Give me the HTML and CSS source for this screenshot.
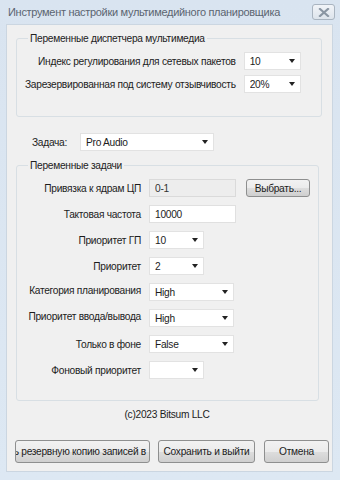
FILE: index.html
```html
<!DOCTYPE html>
<html lang="ru">
<head>
    <meta charset="UTF-8">
    <meta name="viewport" content="width=device-width, initial-scale=1.0">
    <title>Инструмент настройки мультимедийного планировщика</title>
    <link rel="stylesheet" href="styles.css">
</head>
<body>
    <div class="window">
        <div class="titlebar">
            <span class="title">Инструмент настройки мультимедийного планировщика</span>
            <button class="close" title="Закрыть">
                <svg width="12" height="9" viewBox="0 0 12 9">
                    <path d="M2 1 L10 8 M10 1 L2 8" stroke="#8a96a3" stroke-width="2.2" stroke-linecap="square"/>
                </svg>
            </button>
        </div>

        <div class="client">
            <fieldset class="group group-media">
                <legend>Переменные диспетчера мультимедиа</legend>
                <label class="field-label">Индекс регулирования для сетевых пакетов</label>
                <div class="combo combo-small"><select><option>10</option></select></div>
                <label class="field-label">Зарезервированная под систему отзывчивость</label>
                <div class="combo combo-small"><select><option>20%</option></select></div>
            </fieldset>

            <div class="task-row">
                <label class="task-label">Задача:</label>
                <div class="combo combo-task"><select><option>Pro Audio</option></select></div>
            </div>

            <fieldset class="group group-task">
                <legend>Переменные задачи</legend>

                <label class="field-label">Привязка к ядрам ЦП</label>
                <div class="affinity">
                    <input class="textbox" type="text" value="0-1" disabled>
                    <button class="btn btn-pick">Выбрать...</button>
                </div>

                <label class="field-label">Тактовая частота</label>
                <input class="textbox" type="text" value="10000">

                <label class="field-label">Приоритет ГП</label>
                <div class="combo combo-small"><select><option>10</option></select></div>

                <label class="field-label">Приоритет</label>
                <div class="combo combo-small"><select><option>2</option></select></div>

                <label class="field-label lift">Категория планирования</label>
                <div class="combo combo-wide"><select><option>High</option></select></div>

                <label class="field-label lift">Приоритет ввода/вывода</label>
                <div class="combo combo-wide"><select><option>High</option></select></div>

                <label class="field-label">Только в фоне</label>
                <div class="combo combo-wide"><select><option>False</option></select></div>

                <label class="field-label">Фоновый приоритет</label>
                <div class="combo combo-small"><select><option></option></select></div>
            </fieldset>

            <p class="copyright">(c)2023 Bitsum LLC</p>

            <div class="actions">
                <button class="btn btn-backup"><span>Создать резервную копию записей в</span></button>
                <button class="btn btn-save">Сохранить и выйти</button>
                <button class="btn btn-cancel">Отмена</button>
            </div>
        </div>
    </div>
</body>
</html>
```

FILE: styles.css
```css
body {
    margin: 0;
    font-family: "Liberation Sans", Arial, sans-serif;
    font-size: 10.2px;
    letter-spacing: -0.28px;
    color: #1c1c1c;
}
.window {
    width: 340px;
    height: 480px;
    box-sizing: border-box;
    padding: 0 7px 8px 6px;
    background: linear-gradient(#d9e4f0, #dde8f3);
    display: flex;
    flex-direction: column;
    overflow: hidden;
}
.titlebar {
    height: 24px;
    display: flex;
    align-items: center;
    justify-content: space-between;
}
.title {
    font-size: 11px;
    letter-spacing: -0.3px;
    color: #5b6470;
    padding-left: 2px;
    white-space: nowrap;
}
.close {
    width: 23px;
    height: 16px;
    margin-right: -2px;
    padding: 0;
    border: 1px solid #a9b4c0;
    border-radius: 3px;
    background: linear-gradient(#f1f4f8, #dde4ec);
    display: flex;
    align-items: center;
    justify-content: center;
}
.client {
    flex: 1;
    background: #f0f0f0;
    border: 1px solid #cbd6e1;
    padding: 0 14px 0 9px;
    display: flex;
    flex-direction: column;
}
.group {
    margin: 0;
    border: 1px solid #d8dfe4;
    border-radius: 3px;
    display: grid;
    align-items: center;
}
.group legend {
    padding: 0 2px;
    margin-left: 3px;
    color: #222;
}
.group-media {
    margin-top: 8px;
    grid-template-columns: 1fr 57px;
    column-gap: 8px;
    row-gap: 5px;
    padding: 8px 20px 23px 8px;
}
.group-task {
    margin-top: 9px;
    grid-template-columns: 116px 1fr;
    column-gap: 8px;
    row-gap: 8px;
    padding: 8px 8px 21px 8px;
    justify-items: start;
}
.field-label {
    justify-self: end;
    text-align: right;
    white-space: nowrap;
}
.field-label.lift {
    margin-top: -4px;
}
.task-row {
    display: flex;
    align-items: center;
    margin-top: 16px;
}
.task-label {
    width: 48px;
    margin-left: 16px;
}
.combo {
    position: relative;
    height: 18px;
}
.combo select {
    appearance: none;
    width: 100%;
    height: 18px;
    margin: 0;
    padding: 0 0 0 5px;
    border: 1px solid #e2e2e2;
    border-radius: 0;
    background: #fff;
    font: inherit;
    letter-spacing: inherit;
    color: #1c1c1c;
}
.combo::after {
    content: "";
    position: absolute;
    right: 6px;
    top: 7px;
    border-left: 3.5px solid transparent;
    border-right: 3.5px solid transparent;
    border-top: 4px solid #222;
}
.combo-small {
    width: 55px;
}
.combo-wide {
    width: 85px;
}
.combo-task {
    width: 134px;
}
.group-media .combo-small {
    width: 57px;
}
.textbox {
    width: 87px;
    height: 18px;
    box-sizing: border-box;
    margin: 0;
    padding: 0 5px;
    border: 1px solid #e0e0e0;
    background: #fff;
    font: inherit;
    letter-spacing: inherit;
    color: #1c1c1c;
}
.textbox:disabled {
    background: #ededed;
    border-color: #dadada;
    color: #333;
}
.affinity {
    display: flex;
    gap: 10px;
}
.btn {
    height: 23px;
    margin: 0;
    padding: 0;
    border: 1px solid #8e8f8f;
    border-radius: 3px;
    background: linear-gradient(#f2f2f2 0%, #ebebeb 50%, #dddddd 51%, #cfcfcf 100%);
    font: inherit;
    letter-spacing: inherit;
    color: #1c1c1c;
    display: flex;
    align-items: center;
    justify-content: center;
    white-space: nowrap;
    overflow: hidden;
}
.btn-pick {
    width: 64px;
    height: 18px;
}
.copyright {
    margin: 8px 0 0;
    text-align: center;
}
.actions {
    display: flex;
    margin-top: 20px;
    margin-left: -1px;
}
.btn-backup {
    width: 135px;
    flex: none;
    justify-content: flex-end;
    padding-right: 3px;
}
.btn-save {
    width: 97px;
    flex: none;
    margin-left: 8px;
}
.btn-cancel {
    width: 65px;
    flex: none;
    margin-left: 9px;
}
```
